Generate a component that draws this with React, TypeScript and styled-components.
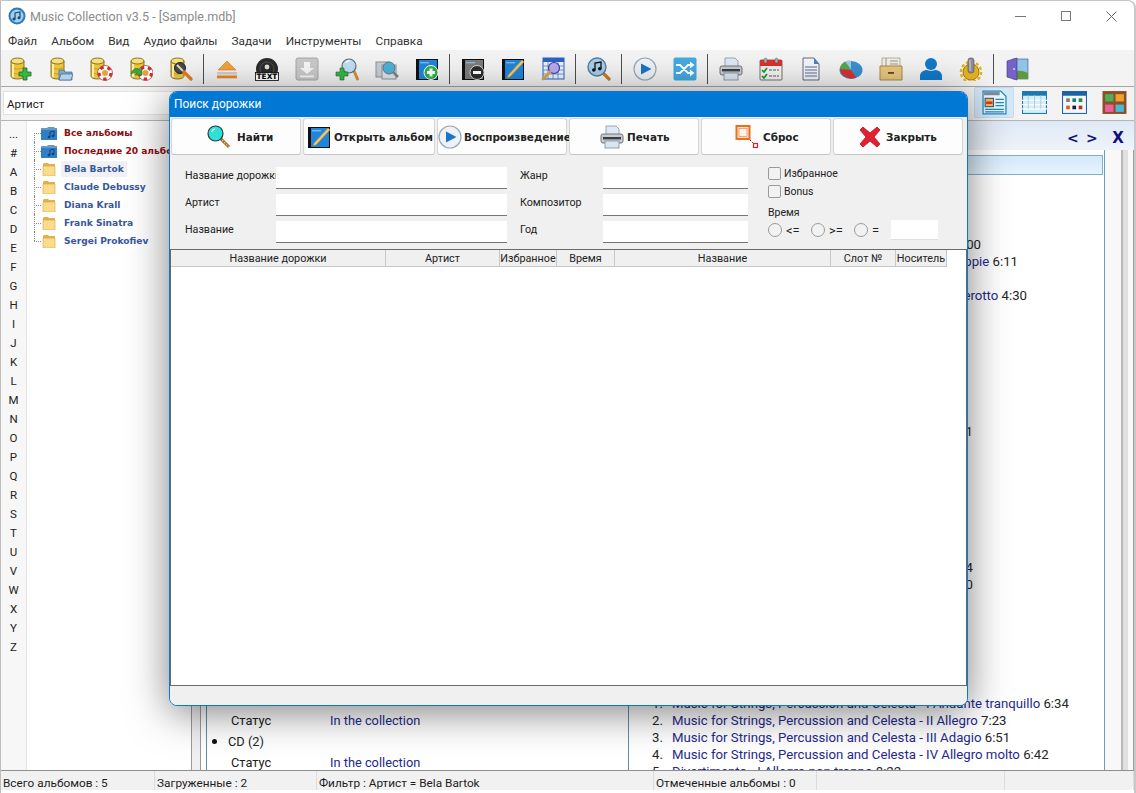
import React from "react";
import styled, { createGlobalStyle } from "styled-components";

const UI_FONT = `Roboto, "Open Sans", "Noto Sans", sans-serif`;
const BOLD_FONT = `"DejaVu Sans", "Liberation Sans", sans-serif`;

const GlobalStyle = createGlobalStyle`
  html, body {
    margin: 0;
    padding: 0;
    background: #fff;
  }
  body {
    font-family: ${UI_FONT};
    font-size: 12px;
    color: #1c1c1c;
  }
  * { box-sizing: border-box; }
`;

/* ---------- icons ---------- */

const Svg = ({ size = 24, children }: { size?: number; children: React.ReactNode }) => (
  <svg width={size} height={size} viewBox="0 0 24 24" style={{ flex: "none", display: "block" }}>
    {children}
  </svg>
);

const Cylinder = () => (
  <g stroke="#6d5a10" strokeWidth="0.8">
    <path d="M2 4v15c0 1.800 3 3 6.500 3s6.500-1.200 6.500-3V4z" fill="#e9c53f" />
    <path d="M2 9c0 1.800 3 3 6.500 3s6.500-1.200 6.500-3M2 14c0 1.800 3 3 6.500 3s6.500-1.200 6.500-3" fill="none" stroke="#b79320" />
    <path d="M4 7v13" stroke="#fbeea5" strokeWidth="2" />
    <ellipse cx="8.500" cy="4" rx="6.500" ry="3" fill="#f7e07c" />
  </g>
);

const Buoy = ({ cx = 16, cy = 16, r = 7.500 }: { cx?: number; cy?: number; r?: number }) => (
  <g>
    <circle cx={cx} cy={cy} r={r} fill="#fff" stroke="#8a1c1c" strokeWidth="0.6" />
    <circle cx={cx} cy={cy} r={r - 1.600} fill="none" stroke="#d92a2a" strokeWidth="3" strokeDasharray="3.500 3.900" />
    <circle cx={cx} cy={cy} r={r - 4.500} fill="#e8a23c" />
  </g>
);

const DbAdd = () => (
  <Svg>
    <Cylinder />
    <path d="M14 11h4v4h4v4h-4v4h-4v-4h-4v-4h4z" fill="#39b54a" stroke="#176b22" strokeWidth="0.8" />
  </Svg>
);
const DbOpen = () => (
  <Svg>
    <Cylinder />
    <path d="M10 13h5l1 2h7v8H10z" fill="#7fa6cf" stroke="#3e6a96" strokeWidth="0.7" />
    <path d="M10 23l2-6h12l-2 6z" fill="#b6d0ea" stroke="#3e6a96" strokeWidth="0.7" />
  </Svg>
);
const DbBuoy = () => (
  <Svg>
    <Cylinder />
    <Buoy />
  </Svg>
);
const DbRestore = () => (
  <Svg>
    <Cylinder />
    <Buoy cx={16.500} />
    <path d="M2 17c1-5 6-7 9-4l2-2v7H6l2-2c-2-1-4 0-6 1z" fill="#3da63d" stroke="#1c6a1c" strokeWidth="0.5" />
  </Svg>
);
const DbTools = () => (
  <Svg>
    <Cylinder />
    <circle cx="11" cy="11" r="5.500" fill="#4a4a4a" stroke="#222" />
    <path d="M8 8l6 6" stroke="#ddd" strokeWidth="2" />
    <path d="M15 15l7 7" stroke="#e87a1d" strokeWidth="3.200" strokeLinecap="round" />
  </Svg>
);
const Eject = () => (
  <Svg>
    <path d="M12 4l9 9H3z" fill="#f2a13c" stroke="#d97c1a" strokeWidth="0.6" />
    <rect x="2" y="15" width="20" height="2.600" fill="#cfcfcf" />
    <rect x="2" y="18.500" width="20" height="2.800" fill="#e8862a" />
  </Svg>
);
const DiscText = () => (
  <Svg>
    <circle cx="12" cy="12" r="11" fill="#2b2b2b" />
    <circle cx="12" cy="12" r="7" fill="none" stroke="#555" />
    <circle cx="12" cy="10" r="2.400" fill="#ddd" />
    <rect x="0.500" y="15.500" width="23" height="8" fill="#fff" stroke="#000" strokeWidth="0.8" />
    <text x="12" y="22.300" textAnchor="middle" fontFamily={BOLD_FONT} fontWeight="700" fontSize="7.400" fill="#000">
      TEXT
    </text>
  </Svg>
);
const Download = () => (
  <Svg>
    <rect x="1" y="1" width="22" height="22" rx="2" fill="#c9c9c9" stroke="#a8a8a8" />
    <path d="M9 5h6v6h4l-7 6-7-6h4z" fill="#f8f8f8" />
    <rect x="5" y="18.500" width="14" height="1.800" fill="#f8f8f8" />
  </Svg>
);
const MagGlass = ({ fill = "#bfe0f2", cx = 14, cy = 9, r = 7 }: { fill?: string; cx?: number; cy?: number; r?: number }) => (
  <g>
    <path d={`M${cx + r * 0.7} ${cy + r * 0.7}L22.500 22`} stroke="#d9912e" strokeWidth="3" strokeLinecap="round" />
    <circle cx={cx} cy={cy} r={r} fill={fill} stroke="#56707f" strokeWidth="1.200" />
    <path d={`M${cx - 3} ${cy - 3}a4 4 0 0 1 4-2`} stroke="#fff" strokeWidth="1.200" fill="none" />
  </g>
);
const SearchAdd = () => (
  <Svg>
    <MagGlass />
    <path d="M5 11h4v4h4v4H9v4H5v-4H1v-4h4z" fill="#39b54a" stroke="#176b22" strokeWidth="0.6" />
  </Svg>
);
const SearchPictures = () => (
  <Svg>
    <rect x="1" y="5" width="13" height="15" fill="#c7cdd2" stroke="#8c959c" />
    <rect x="7" y="8" width="14" height="14" fill="#dfe4e8" stroke="#8c959c" />
    <circle cx="14" cy="11" r="6" fill="#4eb2d8" stroke="#5d7686" />
    <path d="M18 15l5 5" stroke="#7a8790" strokeWidth="2.600" />
  </Svg>
);
const AlbumBase = ({ fill = "#1f86dd" }: { fill?: string }) => (
  <g>
    <rect x="1" y="2" width="22" height="21" fill="#111" />
    <rect x="4" y="3" width="18" height="19" fill={fill} />
    <rect x="5" y="5" width="9" height="1.400" fill="#8fc7f2" opacity="0.8" />
  </g>
);
const AlbumAdd = () => (
  <Svg>
    <AlbumBase />
    <circle cx="16" cy="15.500" r="7" fill="#2fb34a" stroke="#fff" />
    <path d="M14.500 11.500h3v2.500H20v3h-2.500v2.500h-3V17H12v-3h2.500z" fill="#fff" />
  </Svg>
);
const AlbumRemove = () => (
  <Svg>
    <AlbumBase fill="#7d7d7d" />
    <circle cx="16" cy="15.500" r="7" fill="#2d2d2d" stroke="#d8d8d8" />
    <rect x="12" y="14" width="8" height="3" fill="#fff" />
  </Svg>
);
const AlbumEdit = () => (
  <Svg>
    <AlbumBase />
    <path d="M21 3l2 2L9 20l-3 1 1-3z" fill="#f2c96b" stroke="#a5803a" strokeWidth="0.6" />
  </Svg>
);
const TableSearch = () => (
  <Svg>
    <rect x="2" y="1" width="21" height="21" fill="#eef3fb" stroke="#2d62c4" />
    <path d="M2 1h21v4H2z" fill="#2d62c4" />
    <path d="M2 9h21M2 13h21M2 17h21M7 5v17M12 5v17M17 5v17" stroke="#4f80d8" strokeWidth="0.8" />
    <circle cx="13" cy="11" r="5.500" fill="#b9a8ee" stroke="#3b3fa8" strokeWidth="1.200" />
    <path d="M9 15l-7 7" stroke="#e0a53a" strokeWidth="2.800" strokeLinecap="round" />
  </Svg>
);
const MusicSearch = () => (
  <Svg>
    <path d="M16 16l6 6" stroke="#c77a2c" strokeWidth="3.200" strokeLinecap="round" />
    <circle cx="10" cy="10" r="9" fill="#a9cdea" stroke="#4d7fa6" strokeWidth="1.400" />
    <path d="M8 13V6l6-1v6.500" fill="none" stroke="#111" strokeWidth="1.300" />
    <circle cx="6.800" cy="13" r="1.800" fill="#111" />
    <circle cx="12.800" cy="11.800" r="1.800" fill="#111" />
  </Svg>
);
const Play = () => (
  <Svg>
    <circle cx="12" cy="12" r="11" fill="#eef2f6" stroke="#9aa8b6" strokeWidth="1.200" />
    <path d="M8 6.500L18.500 12 8 17.500z" fill="#1a74c9" />
  </Svg>
);
const Shuffle = () => (
  <Svg>
    <rect x="0.500" y="0.500" width="23" height="23" rx="2" fill="#45a9e0" />
    <path d="M3 8h4l8 8h3M3 16h4l8-8h3" fill="none" stroke="#fff" strokeWidth="1.900" />
    <path d="M17 4.500l4.500 3.500-4.500 3.500zM17 12.500l4.500 3.500-4.500 3.500z" fill="#fff" />
  </Svg>
);
const Printer = () => (
  <Svg>
    <path d="M6 1h10l3 3v6H6z" fill="#dfe9f6" stroke="#8392a3" strokeWidth="0.8" />
    <rect x="1" y="9" width="22" height="9" rx="2" fill="#c8ccd0" stroke="#6f7780" />
    <rect x="3" y="12" width="18" height="2.400" fill="#3a3f44" />
    <rect x="5" y="16" width="14" height="7" fill="#dce6f2" stroke="#7d8994" strokeWidth="0.8" />
  </Svg>
);
const Calendar = () => (
  <Svg>
    <rect x="1" y="3" width="22" height="20" rx="1" fill="#f3f3f1" stroke="#77706a" />
    <rect x="1" y="3" width="22" height="6" fill="#dc2f2f" />
    <rect x="5" y="1" width="3" height="5" rx="1.500" fill="#a9a9a9" stroke="#555" strokeWidth="0.4" />
    <rect x="16" y="1" width="3" height="5" rx="1.500" fill="#a9a9a9" stroke="#555" strokeWidth="0.4" />
    <path d="M3 13l2 2 3-4M3 19l2 2 3-4" fill="none" stroke="#159a2c" strokeWidth="1.700" />
    <path d="M10 13h10M10 19h10" stroke="#8a8a8a" strokeWidth="1.600" strokeDasharray="3 1" />
  </Svg>
);
const Doc = () => (
  <Svg>
    <path d="M4 1h11l5 6v16H4z" fill="#f1f4fa" stroke="#3f4a5c" strokeWidth="0.8" />
    <path d="M15 1v6h5z" fill="#4f7fb8" />
    <path d="M6 10h12M6 13h12M6 16h12M6 19h12" stroke="#8f9ab0" strokeWidth="1.700" />
  </Svg>
);
const Pie = () => (
  <Svg>
    <ellipse cx="12" cy="13" rx="11.500" ry="9" fill="#3b8fd0" />
    <path d="M12 13L6 4.500C8 3.500 10 3.500 12 3.500z" fill="#9bcbec" />
    <path d="M12 13L1 11.500C1.500 8 3.500 6 6 4.500z" fill="#58a845" />
    <path d="M12 13L1 12c.5 5 5 9 11 9.500 2 0 4-.3 5-1z" fill="#d8322e" />
  </Svg>
);
const Cabinet = () => (
  <Svg>
    <rect x="3" y="1" width="18" height="11" fill="#f0eee6" stroke="#9c9788" strokeWidth="0.7" />
    <path d="M7 1v11M11 4h8M11 7h8" stroke="#9c9788" />
    <path d="M1 9h22v14H1z" fill="#e8c67f" stroke="#a98a45" />
    <rect x="9" y="15" width="6" height="1.800" fill="#5d4a22" />
  </Svg>
);
const UserIcon = () => (
  <Svg>
    <circle cx="12" cy="7" r="6" fill="#1479c9" />
    <path d="M1 23v-4c0-4 4-6 7-6 1 1 7 1 8 0 3 0 7 2 7 6v4z" fill="#1479c9" />
  </Svg>
);
const GearPin = () => (
  <Svg>
    <circle cx="12" cy="15" r="8" fill="#e6b422" stroke="#a67f12" />
    <circle cx="12" cy="15" r="10" fill="none" stroke="#e6b422" strokeWidth="2.600" strokeDasharray="3 2.200" />
    <rect x="9" y="1" width="6" height="15" rx="2.500" fill="#8c9094" stroke="#55595d" strokeWidth="0.7" />
    <path d="M11 3v11" stroke="#c9cccf" strokeWidth="1.200" />
  </Svg>
);
const DoorPicture = () => (
  <Svg>
    <rect x="8" y="2" width="15" height="20" fill="#8fc3e8" stroke="#4a4a7a" strokeWidth="0.6" />
    <path d="M8 22v-6c4-3 8-3 15 0v6z" fill="#5c9a3c" />
    <path d="M2 4l10-3v22L2 20z" fill="#7563c8" stroke="#3c3470" strokeWidth="0.6" />
    <circle cx="9" cy="12" r="0.900" fill="#e4e0ff" />
  </Svg>
);
const ViewDetail = () => (
  <Svg size={25}>
    <path d="M1 1h17l5 5v17H1z" fill="#eaf6fd" stroke="#1d8ac0" strokeWidth="1.200" />
    <rect x="2" y="2" width="15" height="3" fill="#7e8d99" />
    <rect x="3" y="8" width="8" height="8" fill="#f3c04a" stroke="#3a4a8c" />
    <rect x="4" y="11" width="6" height="2.500" fill="#d8352e" />
    <path d="M13 9h8M13 12h8M13 15h8M3 18.500h18M3 21h18" stroke="#1d8ac0" strokeWidth="1.200" />
  </Svg>
);
const ViewTable = () => (
  <Svg size={25}>
    <rect x="0.500" y="1.500" width="23" height="21" fill="#d6eefa" stroke="#1c78b4" />
    <rect x="0.500" y="1.500" width="23" height="4" fill="#1c78b4" />
    <path d="M0 10h24M0 14h24M0 18h24" stroke="#fff" strokeWidth="1.200" />
    <path d="M6 5v13M12 5v13M18 5v13" stroke="#9cc8e4" strokeWidth="0.8" />
  </Svg>
);
const ViewGrid = () => (
  <Svg size={25}>
    <rect x="0.500" y="1.500" width="23" height="21" fill="#f3f6fa" stroke="#1c62a8" />
    <rect x="0.500" y="1.500" width="23" height="4" fill="#1c62a8" />
    <rect x="4" y="8" width="3.500" height="3.500" fill="#7d7d7d" />
    <rect x="10" y="8" width="3.500" height="3.500" fill="#18806f" />
    <rect x="16" y="8" width="3.500" height="3.500" fill="#2e8a3c" />
    <rect x="4" y="15" width="3.500" height="3.500" fill="#d95f1e" />
    <rect x="10" y="15" width="3.500" height="3.500" fill="#1c1c3c" />
    <rect x="16" y="15" width="3.500" height="3.500" fill="#a0401e" />
  </Svg>
);
const ViewShelves = () => (
  <Svg size={25}>
    <rect x="0.500" y="1" width="23" height="22" fill="#8a5128" />
    <rect x="3" y="4" width="8" height="7" fill="#4fae5a" />
    <rect x="13" y="4" width="8" height="7" fill="#f0a22e" />
    <rect x="3" y="14" width="8" height="7" fill="#ef5fa0" />
    <rect x="13" y="14" width="8" height="7" fill="#4db8d4" />
  </Svg>
);
const SearchCyan = () => (
  <Svg>
    <path d="M13 13l9 9" stroke="#a8642a" strokeWidth="3" />
    <path d="M13 13l9 9" stroke="#f1cfa0" strokeWidth="1.200" strokeDasharray="1.500 1.500" />
    <circle cx="8.500" cy="8.500" r="7.500" fill="#2fe0d8" stroke="#2b3b3b" strokeWidth="1.200" />
    <path d="M4.500 7a4.500 4.500 0 0 1 3.500-3" stroke="#d5fffb" strokeWidth="1.400" fill="none" />
  </Svg>
);
const ResetIcon = () => (
  <Svg>
    <rect x="1.500" y="1" width="13" height="13" fill="#fbe5c0" stroke="#e8711f" strokeWidth="2" />
    <rect x="4" y="3.500" width="8" height="8" fill="#fff4e2" stroke="#e85a5a" strokeWidth="0.5" />
    <path d="M15 15l4 4" stroke="#333" strokeWidth="1" strokeDasharray="1.500 1" />
    <rect x="18.500" y="18.500" width="4" height="4" fill="#fff" stroke="#e02020" strokeWidth="1.200" />
  </Svg>
);
const CloseRed = () => (
  <Svg>
    <path
      d="M5 2l7 6 7-6 3 3-6 7 6 7-3 3-7-6-7 6-3-3 6-7-6-7z"
      fill="#e3202f"
      stroke="#b31421"
      strokeWidth="0.8"
      strokeLinejoin="round"
    />
  </Svg>
);
const AppLogo = () => (
  <svg width="18" height="18" viewBox="0 0 18 18" style={{ flex: "none" }}>
    <circle cx="9" cy="9" r="8.500" fill="#2f78b8" />
    <circle cx="9" cy="9" r="6.500" fill="#9fd0ee" />
    <path d="M7 12V6l5-1v5.500" fill="none" stroke="#134a7c" strokeWidth="1.200" />
    <circle cx="6" cy="12" r="1.500" fill="#134a7c" />
    <circle cx="11" cy="10.800" r="1.500" fill="#134a7c" />
  </svg>
);
const FolderBlue = () => (
  <svg width="16" height="14" viewBox="0 0 16 14" style={{ flex: "none" }}>
    <path d="M0 2h6l1-1h6l1 1h2v12H0z" fill="#6b96c8" />
    <path d="M0 4h16v10H0z" fill="#2f7fc6" />
    <path d="M9 11V6l4-1v5" fill="none" stroke="#0f3f78" strokeWidth="1" />
    <circle cx="8" cy="11" r="1.300" fill="#0f3f78" />
    <circle cx="12" cy="10" r="1.300" fill="#0f3f78" />
  </svg>
);
const FolderYellow = () => (
  <svg width="16" height="14" viewBox="0 0 16 14" style={{ flex: "none" }}>
    <path d="M2 2l1-1h4l1 1h6v12H2z" fill="#e2b04e" />
    <path d="M2 4h12v10H2z" fill="#f9dc8c" stroke="#d9a544" strokeWidth="0.6" />
  </svg>
);

/* ---------- data ---------- */

const TOOLBAR: (React.ComponentType | null)[] = [
  DbAdd, DbOpen, DbBuoy, DbRestore, DbTools, null,
  Eject, DiscText, Download, SearchAdd, SearchPictures, AlbumAdd, null,
  AlbumRemove, AlbumEdit, TableSearch, null,
  MusicSearch, null,
  Play, Shuffle, null,
  Printer, Calendar, Doc, Pie, Cabinet, UserIcon, GearPin, null,
  DoorPicture,
];

const MENU = ["Файл", "Альбом", "Вид", "Аудио файлы", "Задачи", "Инструменты", "Справка"];
const LETTERS = ["...", "#", ..."ABCDEFGHIJKLMNOPQRSTUVWXYZ".split("")];
const ARTISTS = ["Bela Bartok", "Claude Debussy", "Diana Krall", "Frank Sinatra", "Sergei Prokofiev"];

const ACTIONS = [
  { label: "Найти", icon: SearchCyan, pad: 35, gap: 6 },
  { label: "Открыть альбом", icon: AlbumEdit, pad: 3, gap: 3 },
  { label: "Воспроизведение", icon: Play, pad: 0, gap: 2 },
  { label: "Печать", icon: Printer, pad: 30, gap: 3 },
  { label: "Сброс", icon: ResetIcon, pad: 33, gap: 4 },
  { label: "Закрыть", icon: CloseRed, pad: 24, gap: 4 },
];

const COLUMNS = [
  { title: "Название дорожки", width: 215 },
  { title: "Артист", width: 114 },
  { title: "Избранное", width: 57 },
  { title: "Время", width: 58 },
  { title: "Название", width: 216 },
  { title: "Слот №", width: 65 },
  { title: "Носитель", width: 51 },
];

// rows of the track list seen to the right of the dialog, 17px apart
const TRACK_TAILS: ({ name?: string; time: string; end: number } | null)[] = [
  { time: "00", end: 352 },
  { name: "ppie", time: "6:11", end: 389 },
  null,
  { name: "erotto", time: "4:30", end: 398 },
  ...Array(7).fill(null),
  { time: "1", end: 344 },
  ...Array(7).fill(null),
  { time: "4", end: 344 },
  { time: "0", end: 344 },
  ...Array(6).fill(null),
];

const TRACKS = [
  { no: "1.", name: "Music for Strings, Percussion and Celesta - I Andante tranquillo", time: "6:34" },
  { no: "2.", name: "Music for Strings, Percussion and Celesta - II Allegro", time: "7:23" },
  { no: "3.", name: "Music for Strings, Percussion and Celesta - III Adagio", time: "6:51" },
  { no: "4.", name: "Music for Strings, Percussion and Celesta - IV Allegro molto", time: "6:42" },
  { no: "5.", name: "Divertimento - I Allegro non troppo", time: "8:22" },
];

const STATUS = [
  { text: "Всего альбомов : 5", width: 154 },
  { text: "Загруженные : 2", width: 162 },
  { text: "Фильтр : Артист = Bela Bartok", width: 337 },
  { text: "Отмеченные альбомы : 0", width: 163 },
  { text: "", width: 188 },
  { text: "", width: 129 },
];

/* ---------- app ---------- */

export default function App() {
  return (
    <Page>
      <GlobalStyle />
      <TitleBar>
        <AppLogo />
        <AppTitle>Music Collection v3.5 - [Sample.mdb]</AppTitle>
        <Captions>
          <MinimizeGlyph />
          <MaximizeGlyph />
          <CloseGlyph viewBox="0 0 11 11">
            <path d="M0.500 0.500l10 10M10.500 0.500l-10 10" stroke="#666" fill="none" />
          </CloseGlyph>
        </Captions>
      </TitleBar>

      <MenuBar>
        {MENU.map((m) => (
          <MenuItem key={m}>{m}</MenuItem>
        ))}
      </MenuBar>

      <Toolbar>
        {TOOLBAR.map((Icon, i) =>
          Icon ? (
            <ToolButton key={i}>
              <Icon />
            </ToolButton>
          ) : (
            <ToolSeparator key={i} />
          )
        )}
      </Toolbar>

      <FilterBar>
        <Combo>Артист</Combo>
        <ViewSwitch>
          <ViewButton $active>
            <ViewDetail />
          </ViewButton>
          <ViewButton>
            <ViewTable />
          </ViewButton>
          <ViewButton>
            <ViewGrid />
          </ViewButton>
          <ViewButton>
            <ViewShelves />
          </ViewButton>
        </ViewSwitch>
      </FilterBar>

      <Content>
        <AlphaColumn>
          {LETTERS.map((l) => (
            <AlphaItem key={l}>{l}</AlphaItem>
          ))}
        </AlphaColumn>

        <Tree>
          <TreeRow>
            <Connector $first />
            <FolderBlue />
            <TreeLabel $special>Все альбомы</TreeLabel>
          </TreeRow>
          <TreeRow>
            <Connector />
            <FolderBlue />
            <TreeLabel $special>Последние 20 альбомов</TreeLabel>
          </TreeRow>
          {ARTISTS.map((a, i) => (
            <TreeRow key={a}>
              <Connector $last={i === ARTISTS.length - 1} />
              <FolderYellow />
              <TreeLabel $selected={i === 0}>{a}</TreeLabel>
            </TreeRow>
          ))}
        </Tree>

        <Splitter />

        <AlbumPanel>
          <AlbumRow>
            <AlbumKey>Статус</AlbumKey>
            <AlbumValue>In the collection</AlbumValue>
          </AlbumRow>
          <MediaRow>
            <Bullet />
            CD (2)
          </MediaRow>
          <AlbumRow>
            <AlbumKey>Статус</AlbumKey>
            <AlbumValue>In the collection</AlbumValue>
          </AlbumRow>
        </AlbumPanel>

        <DetailPanel>
          <DetailHeader>
            <NavMark>&lt;</NavMark>
            <NavMark>&gt;</NavMark>
            <NavClose>X</NavClose>
          </DetailHeader>
          <DetailBody>
            <DetailSheet>
              <SelectedBand />
              <TrackList>
                {TRACK_TAILS.map((t, i) =>
                  t ? (
                    <TailRow key={i} $end={t.end}>
                      {t.name && <TrackName>{t.name} </TrackName>}
                      {t.time}
                    </TailRow>
                  ) : (
                    <TailRow key={i} $end={0} />
                  )
                )}
                {TRACKS.map((t) => (
                  <TrackRow key={t.no}>
                    <TrackNo>{t.no}</TrackNo>
                    <TrackName>{t.name}</TrackName> {t.time}
                  </TrackRow>
                ))}
              </TrackList>
            </DetailSheet>
            <ScrollTrack>
              <ScrollThumb />
            </ScrollTrack>
          </DetailBody>
        </DetailPanel>
      </Content>

      <StatusBar>
        {STATUS.map((s, i) => (
          <StatusCell key={i} $width={s.width}>
            {s.text}
          </StatusCell>
        ))}
      </StatusBar>

      <Dialog>
        <DialogTitle>Поиск дорожки</DialogTitle>
        <ActionBar>
          {ACTIONS.map(({ label, icon: Icon, pad, gap }) => (
            <ActionButton key={label} $pad={pad} $gap={gap}>
              <Icon />
              <span>{label}</span>
            </ActionButton>
          ))}
        </ActionBar>

        <SearchForm>
          <FieldGrid>
            <FieldLabel>Название дорожки</FieldLabel>
            <TextBox />
            <FieldLabel $col2>Жанр</FieldLabel>
            <TextBox />
            <FieldLabel>Артист</FieldLabel>
            <TextBox />
            <FieldLabel $col2>Композитор</FieldLabel>
            <TextBox />
            <FieldLabel>Название</FieldLabel>
            <TextBox />
            <FieldLabel $col2>Год</FieldLabel>
            <TextBox />
          </FieldGrid>
          <Options>
            <CheckRow>
              <CheckBox />
              Избранное
            </CheckRow>
            <CheckRow>
              <CheckBox />
              Bonus
            </CheckRow>
            <TimeLabel>Время</TimeLabel>
            <TimeRow>
              <RadioItem $width={43}>
                <RadioDot />
                &lt;=
              </RadioItem>
              <RadioItem $width={43}>
                <RadioDot />
                &gt;=
              </RadioItem>
              <RadioItem $width={37}>
                <RadioDot />=
              </RadioItem>
              <TimeBox />
            </TimeRow>
          </Options>
        </SearchForm>

        <ResultTable>
          <HeaderRow>
            {COLUMNS.map((c) => (
              <HeaderCell key={c.title} $width={c.width}>
                {c.title}
              </HeaderCell>
            ))}
          </HeaderRow>
        </ResultTable>
        <DialogFooter />
      </Dialog>
    </Page>
  );
}

/* ---------- window ---------- */

const Page = styled.div`
  position: relative;
  width: 1136px;
  height: 793px;
  overflow: hidden;
  display: flex;
  flex-direction: column;
  background: #fff;
  border-top: 1px solid #c4c4c4;
  border-left: 1px solid #bdbdbd;
  border-right: 2px solid #c8c8c8;
  border-top-right-radius: 8px;
`;

const TitleBar = styled.header`
  height: 29px;
  display: flex;
  align-items: center;
  padding: 1px 0 0 7px;
  gap: 4px;
  flex: none;
`;

const AppTitle = styled.span`
  color: #8b8b8b;
  font-size: 12.500px;
`;

const Captions = styled.div`
  margin-left: auto;
  display: flex;
  align-items: center;
  padding-right: 17px;
  gap: 35px;
`;

const MinimizeGlyph = styled.i`
  display: block;
  width: 11px;
  height: 1px;
  background: #777;
`;

const MaximizeGlyph = styled.i`
  display: block;
  width: 10px;
  height: 10px;
  border: 1px solid #777;
`;

const CloseGlyph = styled.svg`
  width: 11px;
  height: 11px;
`;

const MenuBar = styled.nav`
  height: 20px;
  flex: none;
  display: flex;
  align-items: center;
  gap: 14px;
  padding: 2px 0 0 7px;
`;

const MenuItem = styled.span`
  font-size: 11.800px;
  color: #333;
`;

const Toolbar = styled.div`
  height: 37px;
  flex: none;
  display: flex;
  align-items: center;
  padding-top: 2px;
  background: #f3f3f3;
  border-bottom: 1px solid #a9a5a2;
`;

const ToolButton = styled.div`
  width: 40px;
  display: flex;
  justify-content: center;
`;

const ToolSeparator = styled.div`
  width: 5px;
  height: 30px;
  flex: none;
  margin-left: 2px;
  margin-right: -1px;
  border-left: 1px solid #4f4f4f;
`;

const FilterBar = styled.div`
  height: 34px;
  flex: none;
  display: flex;
  align-items: center;
  justify-content: space-between;
  background: #f3f3f3;
  padding: 0 0 0 2px;
  border-bottom: 1px solid #b5b5b5;
`;

const Combo = styled.div`
  width: 180px;
  height: 24px;
  margin-top: -2px;
  padding-left: 3px;
  line-height: 24px;
  background: #fff;
  border: 1px solid #e3e3e3;
  font-size: 11.500px;
`;

const ViewSwitch = styled.div`
  display: flex;
  align-items: center;
  margin-top: -2px;
`;

const ViewButton = styled.div<{ $active?: boolean }>`
  width: 40px;
  height: 31px;
  display: flex;
  align-items: center;
  justify-content: center;
  border-radius: 2px;
  background: ${(p) => (p.$active ? "#d5e8f8" : "transparent")};
  border: 1px solid ${(p) => (p.$active ? "#c3dcf2" : "transparent")};
`;

const Content = styled.main`
  flex: 1;
  min-height: 0;
  display: grid;
  grid-template-columns: 26px 163px 15px 423px 1fr;
  overflow: hidden;
`;

const AlphaColumn = styled.div`
  background: #f7f7f7;
  border-right: 1px solid #e4e4e4;
  padding-top: 4px;
  display: flex;
  flex-direction: column;
  align-items: center;
`;

const AlphaItem = styled.span`
  height: 19px;
  line-height: 19px;
  font-size: 11.500px;
  color: #222;
`;

const Tree = styled.div`
  padding: 2.500px 0 0 7px;
  overflow: hidden;
`;

const TreeRow = styled.div`
  height: 18px;
  display: flex;
  align-items: center;
  white-space: nowrap;
`;

const Connector = styled.div<{ $first?: boolean; $last?: boolean }>`
  position: relative;
  width: 7px;
  align-self: stretch;
  flex: none;

  &::before {
    content: "";
    position: absolute;
    left: 0;
    top: ${(p) => (p.$first ? "50%" : "0")};
    bottom: ${(p) => (p.$last ? "50%" : "0")};
    border-left: 1px dotted #8c8c8c;
  }
  &::after {
    content: "";
    position: absolute;
    left: 0;
    right: 0;
    top: 50%;
    border-top: 1px dotted #8c8c8c;
  }
`;

const TreeLabel = styled.span<{ $special?: boolean; $selected?: boolean }>`
  margin-left: 4px;
  padding: 0 3px;
  line-height: 16px;
  font-family: ${BOLD_FONT};
  font-weight: 700;
  font-size: 9.100px;
  color: ${(p) => (p.$special ? "#8a0f12" : "#35589c")};
  background: ${(p) => (p.$selected ? "#f1f1f5" : "transparent")};
`;

const Splitter = styled.div`
  margin-left: 1px;
  width: 10px;
  background: #f0f0f0;
  border-left: 1px solid #9a9a9a;
  border-right: 1px solid #9a9a9a;
`;

const AlbumPanel = styled.section`
  padding-top: 589px;
  border-left: 1px solid #5f8ea8;
  margin-left: 1px;
  font-size: 12.800px;
  overflow: hidden;
`;

const AlbumRow = styled.div`
  height: 21px;
  display: flex;
  align-items: center;
  padding-left: 24px;
`;

const AlbumKey = styled.span`
  width: 99px;
  color: #222;
`;

const AlbumValue = styled.span`
  color: #1f2a8c;
`;

const MediaRow = styled.div`
  height: 21px;
  display: flex;
  align-items: center;
  gap: 11px;
  padding-left: 5px;
  color: #222;
`;

const Bullet = styled.i`
  width: 5px;
  height: 5px;
  border-radius: 50%;
  background: #111;
`;

const DetailPanel = styled.section`
  display: flex;
  flex-direction: column;
  min-width: 0;
  border-left: 1px solid #5f8ea8;
  overflow: hidden;
`;

const DetailHeader = styled.div`
  height: 29px;
  flex: none;
  display: flex;
  align-items: center;
  justify-content: flex-end;
  gap: 9px;
  padding: 4px 10px 0 0;
  background: linear-gradient(#dfe9f6, #eef3fa);
`;

const NavMark = styled.span`
  font-family: ${BOLD_FONT};
  font-weight: 700;
  font-size: 14px;
  color: #10107c;
  width: 10px;
  text-align: center;
`;

const NavClose = styled(NavMark)`
  font-size: 15px;
  margin-left: 7px;
  width: 12px;
`;

const DetailBody = styled.div`
  flex: 1;
  min-height: 0;
  display: flex;
`;

const DetailSheet = styled.div`
  width: 476px;
  flex: none;
  background: #fff;
  border-right: 1px solid #6b9cba;
  padding-top: 5px;
  overflow: hidden;
`;

const SelectedBand = styled.div`
  height: 20px;
  margin-right: 1px;
  background: linear-gradient(#d4e9fa, #e6f3fd);
  border: 1px solid #7fb0cf;
`;

const TrackList = styled.div`
  margin-top: 61px;
  font-size: 13.200px;
  line-height: 17px;
  color: #262626;
`;

const TailRow = styled.div<{ $end: number }>`
  height: 17px;
  width: ${(p) => p.$end}px;
  text-align: right;
  white-space: nowrap;
`;

const TrackRow = styled.div`
  height: 17px;
  padding-left: 23px;
  white-space: nowrap;
`;

const TrackNo = styled.span`
  display: inline-block;
  width: 20px;
`;

const TrackName = styled.span`
  color: #1f2a8c;
`;

const ScrollTrack = styled.div`
  flex: 1;
  background: #f8f8f8;
  display: flex;
  justify-content: flex-end;
  padding-right: 5px;
  border-right: 1px solid #9b9b9b;
`;

const ScrollThumb = styled.div`
  width: 7px;
  background: #e0e0e0;
  border-left: 2px solid #b9b9b9;
`;

const StatusBar = styled.footer`
  height: 20px;
  margin-bottom: 3px;
  flex: none;
  display: flex;
  background: #f1f1f1;
  border-top: 1px solid #8e8e8e;
  border-bottom-right-radius: 6px;
`;

const StatusCell = styled.div<{ $width: number }>`
  width: ${(p) => p.$width}px;
  flex: none;
  padding: 0 0 0 2px;
  line-height: 25px;
  font-size: 11.800px;
  border-right: 1px solid #dcdcdc;
  white-space: nowrap;
`;

/* ---------- dialog ---------- */

const Dialog = styled.div`
  position: absolute;
  left: 168px;
  top: 90px;
  width: 799px;
  height: 615px;
  display: flex;
  flex-direction: column;
  background: #f0f0f0;
  border: 1px solid #0a78cf;
  border-radius: 8px;
  overflow: hidden;
  box-shadow: 0 6px 40px rgba(0, 0, 0, 0.5);
`;

const DialogTitle = styled.div`
  height: 25px;
  flex: none;
  padding-left: 4px;
  line-height: 25px;
  background: #0078d4;
  color: #fff;
  font-size: 11.900px;
`;

const ActionBar = styled.div`
  flex: none;
  display: flex;
  gap: 2px;
  padding: 1px 0 0 1px;
`;

const ActionButton = styled.div<{ $pad: number; $gap: number }>`
  width: 130px;
  height: 37px;
  flex: none;
  display: flex;
  align-items: center;
  padding-left: ${(p) => p.$pad}px;
  gap: ${(p) => p.$gap}px;
  background: #fdfdfd;
  border: 1px solid #d4d4d4;
  border-bottom-color: #c4c4c4;
  border-radius: 3px;
  white-space: nowrap;
  font-family: ${BOLD_FONT};
  font-weight: 700;
  font-size: 10.400px;
  color: #222;

  &:nth-child(2) {
    width: 132px;
  }
`;

const SearchForm = styled.div`
  height: 94px;
  flex: none;
  display: flex;
  padding: 12px 0 0 15px;
`;

const FieldGrid = styled.div`
  display: grid;
  grid-template-columns: 91px 231px 96px 145px;
  grid-auto-rows: 22px;
  row-gap: 5px;
`;

const FieldLabel = styled.label<{ $col2?: boolean }>`
  line-height: 18px;
  font-size: 10.700px;
  overflow: hidden;
  white-space: nowrap;
  color: #222;
  padding-left: ${(p) => (p.$col2 ? "13px" : "0")};
`;

const TextBox = styled.div`
  background: #fff;
  border-bottom: 1px solid #767676;
`;

const Options = styled.div`
  margin-left: 20px;
  width: 170px;
  display: flex;
  flex-direction: column;
  font-size: 10.500px;
  color: #222;
`;

const CheckRow = styled.label`
  height: 13px;
  margin-bottom: 5px;
  display: flex;
  align-items: center;
  gap: 3px;
  white-space: nowrap;
`;

const CheckBox = styled.i`
  width: 13px;
  height: 13px;
  flex: none;
  background: #f2f2f2;
  border: 1px solid #9a9a9a;
  border-radius: 2px;
`;

const TimeLabel = styled.div`
  height: 14px;
  line-height: 14px;
  margin-top: 3px;
`;

const TimeRow = styled.div`
  height: 20px;
  display: flex;
  align-items: center;
`;

const RadioItem = styled.label<{ $width: number }>`
  width: ${(p) => p.$width}px;
  flex: none;
  display: flex;
  align-items: center;
  gap: 4px;
  font-size: 13px;
  white-space: nowrap;
`;

const RadioDot = styled.i`
  width: 14px;
  height: 14px;
  flex: none;
  background: #f2f2f2;
  border: 1px solid #9a9a9a;
  border-radius: 50%;
`;

const TimeBox = styled.div`
  width: 47px;
  height: 20px;
  background: #fff;
  border-bottom: 1px solid #e0e0e0;
`;

const ResultTable = styled.div`
  flex: 1;
  min-height: 0;
  background: #fff;
  border: 1px solid #6a6a6a;
`;

const HeaderRow = styled.div`
  display: flex;
  height: 17px;
`;

const HeaderCell = styled.div<{ $width: number }>`
  width: ${(p) => p.$width}px;
  flex: none;
  text-align: center;
  line-height: 17px;
  font-size: 10.800px;
  color: #222;
  white-space: nowrap;
  overflow: hidden;
  background: #f0f0f0;
  border-right: 1px solid #c8c8c8;
  border-bottom: 1px solid #c8c8c8;
`;

const DialogFooter = styled.div`
  height: 19px;
  flex: none;
  background: #f0f0f0;
`;
